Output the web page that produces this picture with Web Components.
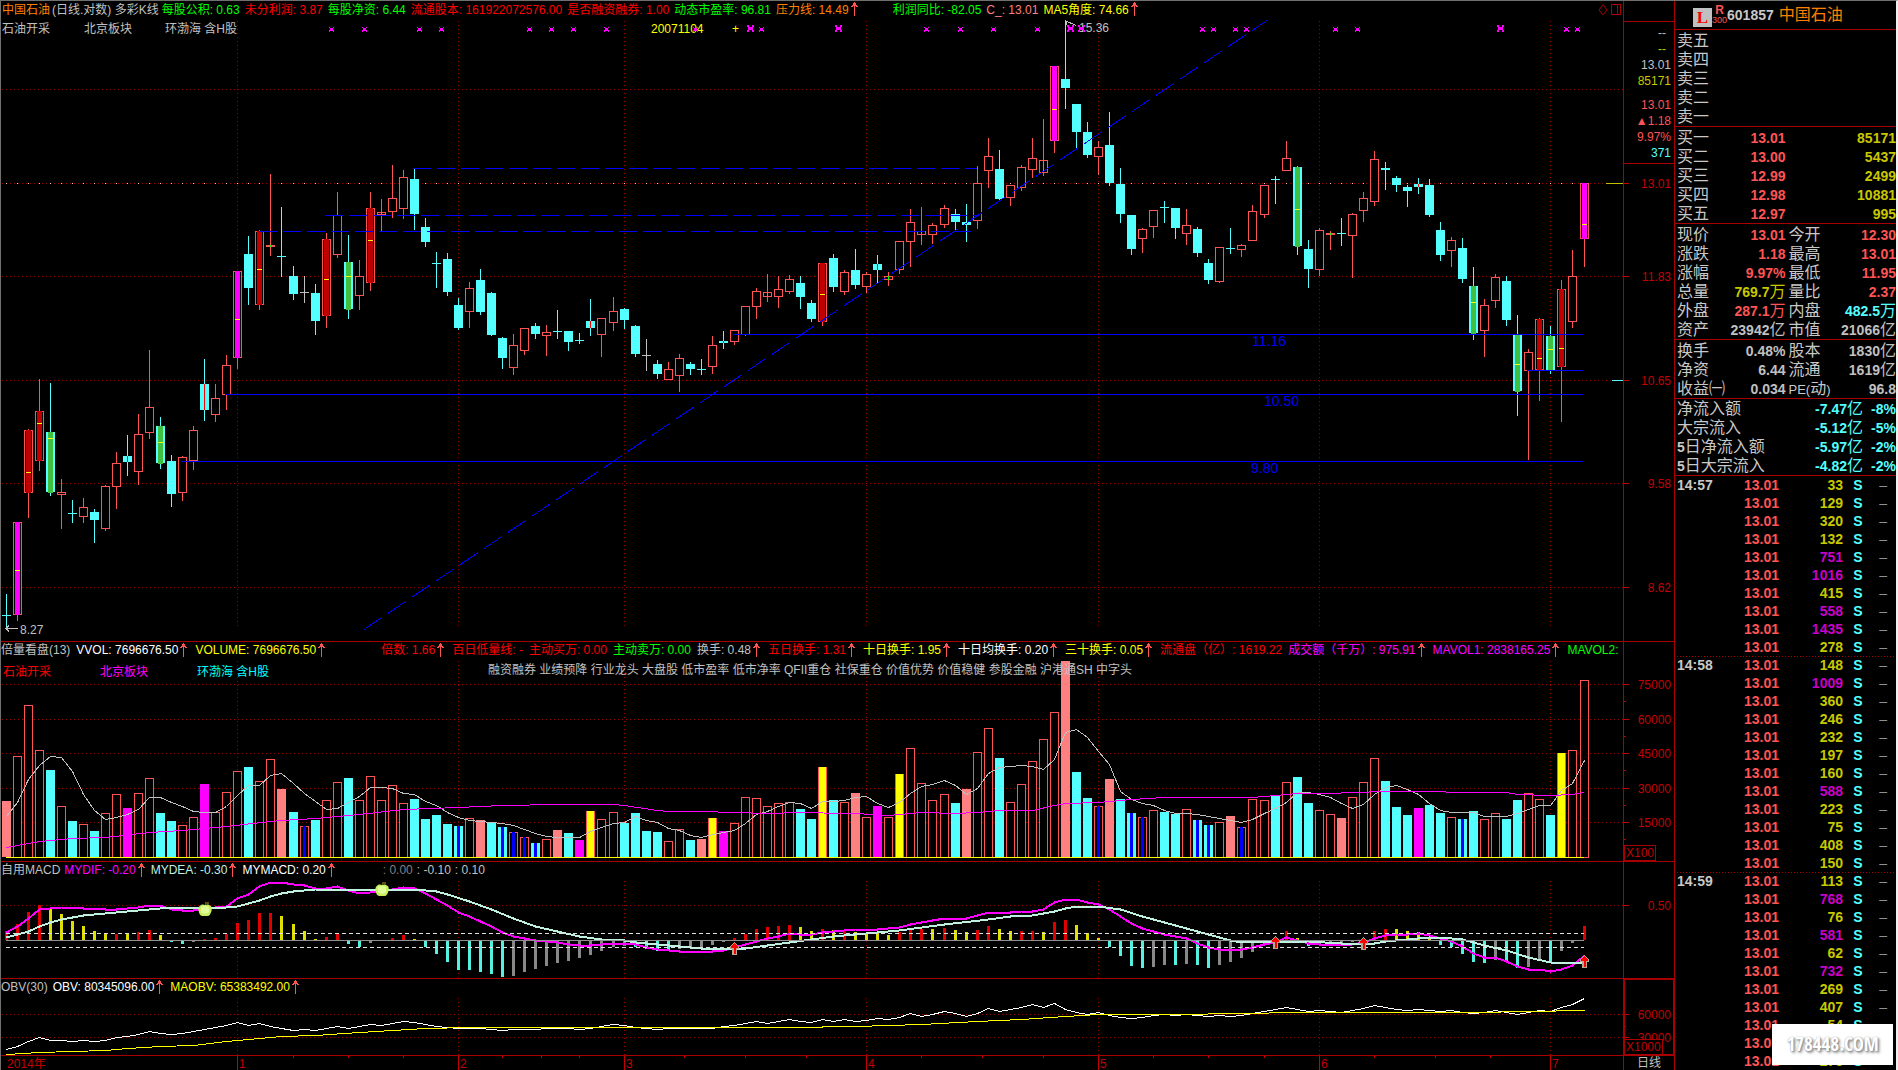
<!DOCTYPE html>
<html lang="zh-CN">
<head>
<meta charset="utf-8">
<title>中国石油 601857</title>
<style>
  html, body {
    margin: 0;
    height: 100%;
    background: #000;
    overflow: hidden;
  }
  body {
    font: 12px/17px "Liberation Sans", "Noto Sans CJK SC", sans-serif;
    color: #c0c0c0;
    --line: #a80000;
    --grid: #980000;
    --scale: #c40000;
    --up: #ff5454;
    --down: #54ffff;
    --gold: #c8c800;
    --mute: #c8c8c8;
  }
  .price indicator-bar { line-height: 19px; padding-left: 1px; }
  .volume indicator-bar { --gap: 6px; }
  .macd indicator-bar { --gap: 4px; }
</style>
</head>
<body>
<stock-terminal>
  <chart-panel class="price">
    <indicator-bar slot="header">
      <indicator-value color="#ff8000">中国石油</indicator-value>
      <indicator-value tight>(日线.对数) 多彩K线</indicator-value>
      <indicator-value color="#00ff00">每股公积: 0.63</indicator-value>
      <indicator-value color="#ff0000">未分利润: 3.87</indicator-value>
      <indicator-value color="#00ff00">每股净资: 6.44</indicator-value>
      <indicator-value color="#ff0000">流通股本: 161922072576.00</indicator-value>
      <indicator-value color="#ff0000">是否融资融券: 1.00</indicator-value>
      <indicator-value color="#00ff00">动态市盈率: 96.81</indicator-value>
      <indicator-value color="#ff8000" up>压力线: 14.49</indicator-value>
      <indicator-value color="#00ff00" lead="narrow">利润同比: -82.05</indicator-value>
      <indicator-value color="#ff8080">C_: 13.01</indicator-value>
      <indicator-value color="#ffff00" up>MA5角度: 74.66</indicator-value>
      <window-tools slot="tools"></window-tools>
    </indicator-bar>
    <price-plot slot="plot"></price-plot>
    <sector-tags slot="tags" class="plain">
      <span>石油开采</span><span>北京板块</span><span>环渤海 含H股</span>
    </sector-tags>
    <value-axis slot="axis" origin="1" labels="183:13.01 276:11.83 380:10.65 483:9.58 587:8.62">
      <level-box></level-box>
    </value-axis>
  </chart-panel>

  <chart-panel class="volume">
    <indicator-bar slot="header">
      <indicator-value>倍量看盘(13)</indicator-value>
      <indicator-value color="#ffffff" up>VVOL: 7696676.50</indicator-value>
      <indicator-value color="#ffff00" up>VOLUME: 7696676.50</indicator-value>
      <indicator-value color="#ff0000" lead="wide" up>倍数: 1.66</indicator-value>
      <indicator-value color="#ff0000">百日低量线: -</indicator-value>
      <indicator-value color="#ff0000">主动买万: 0.00</indicator-value>
      <indicator-value color="#00ff00">主动卖万: 0.00</indicator-value>
      <indicator-value up>换手: 0.48</indicator-value>
      <indicator-value color="#ff0000" up>五日换手: 1.31</indicator-value>
      <indicator-value color="#ffff00" up>十日换手: 1.95</indicator-value>
      <indicator-value color="#ffffff" up>十日均换手: 0.20</indicator-value>
      <indicator-value color="#ffff00" up>三十换手: 0.05</indicator-value>
      <indicator-value color="#ff0000">流通盘（亿）: 1619.22</indicator-value>
      <indicator-value color="#ff00ff" up>成交额（千万）: 975.91</indicator-value>
      <indicator-value color="#ff00ff" up>MAVOL1: 2838165.25</indicator-value>
      <indicator-value color="#00ff00">MAVOL2:</indicator-value>
    </indicator-bar>
    <volume-plot slot="plot"></volume-plot>
    <sector-tags slot="tags" class="vivid">
      <span style="color:#f00">石油开采</span><span style="color:#f0f">北京板块</span><span style="color:#0ff">环渤海 含H股</span>
      <p>融资融券 业绩预降 行业龙头 大盘股 低市盈率 低市净率 QFII重仓 社保重仓 价值优势 价值稳健 参股金融 沪港通SH 中字头</p>
    </sector-tags>
    <value-axis slot="axis" origin="642" minor="17" unit="X100" labels="684:75000 719:60000 753:45000 788:30000 822:15000"></value-axis>
  </chart-panel>

  <chart-panel class="macd">
    <indicator-bar slot="header">
      <indicator-value>自用MACD</indicator-value>
      <indicator-value color="#ff00ff" up>MYDIF: -0.20</indicator-value>
      <indicator-value color="#c0f0e0" up>MYDEA: -0.30</indicator-value>
      <indicator-value color="#ffffff" up>MYMACD: 0.20</indicator-value>
      <indicator-value color="#808080" lead="medium">: 0.00</indicator-value>
      <indicator-value>: -0.10</indicator-value>
      <indicator-value>: 0.10</indicator-value>
    </indicator-bar>
    <macd-plot slot="plot"></macd-plot>
    <value-axis slot="axis" origin="862" labels="905:0.50"></value-axis>
  </chart-panel>

  <chart-panel class="obv">
    <indicator-bar slot="header">
      <indicator-value>OBV(30)</indicator-value>
      <indicator-value color="#ffffff" up>OBV: 80345096.00</indicator-value>
      <indicator-value color="#ffff00" up>MAOBV: 65383492.00</indicator-value>
    </indicator-bar>
    <obv-plot slot="plot"></obv-plot>
    <value-axis slot="axis" origin="979" minor="12" unit="X1000" active labels="1014:60000 1037:30000"></value-axis>
  </chart-panel>

  <time-axis></time-axis>

  <stock-title slot="side" code="601857">中国石油</stock-title>
  <order-book slot="side"></order-book>
  <quote-grid slot="side"></quote-grid>
  <money-flow slot="side"></money-flow>
  <tick-list slot="side"></tick-list>
  <site-mark slot="mark">178448.COM</site-mark>
</stock-terminal>

<script>
const BARS = 144;
const MONTHS = [[21, '1'], [41, '2'], [56, '3'], [78, '4'], [99, '5'], [119, '6'], [140, '7']];

// kind, high, body top, body bottom, low, [half-way mark]
// r hollow, c solid, m/d/g striped, x doji, k grey doji, q solid with red core, v hollow with green core
const CANDLES = `
x 594 615 616 629|m 522 522 615 621 570|d 429 430 493 518 472|d 379 411 461 471 423|g 383 432 492 496 438|r 479 492 495 529
x 500 513 514 523|r 498 507 517 523|c 509 512 520 543|r 485 486 529 531|r 452 463 487 509|q 435 456 462 476
r 414 434 472 485|r 350 407 433 439|g 417 426 463 469 442|c 455 461 494 507|r 456 457 493 501|r 426 430 461 470
q 359 384 410 421|r 384 398 415 422|r 355 365 395 410|m 271 271 358 369 319|c 236 254 288 305|d 230 231 305 310 269
v 174 245 247 256|x 207 256 257 277|c 266 276 294 300|k 276 292 293 303|c 284 293 321 335|d 233 239 316 328 279
r 192 215 255 258|g 235 262 309 319 276|r 260 276 296 310|d 192 208 283 291 240|v 199 212 215 231|r 165 198 212 218
r 170 177 209 219|c 168 179 214 230|c 218 227 242 247|x 252 263 264 288|c 253 259 292 296|c 298 305 328 330
r 282 288 312 328|c 269 280 312 315|c 292 293 335 336|c 337 338 358 369|r 334 345 368 375|r 328 328 351 355
c 323 326 334 339|r 325 332 336 356|x 310 331 332 339|c 331 331 342 351|x 333 340 341 344|q 299 321 328 336
r 318 318 335 357|r 297 311 323 331|c 308 309 320 329|c 325 326 354 357|k 339 355 356 371|c 360 364 374 379
r 362 369 380 380|r 354 358 376 392|c 362 364 369 375|x 359 369 370 375|r 336 345 367 374|q 331 341 343 349
r 330 330 342 345|r 306 306 335 336|r 288 291 307 319|v 274 292 297 302|r 276 289 297 308|r 275 279 292 294
c 276 283 297 309|c 300 303 319 322|d 263 263 322 326 294|c 254 258 287 292|r 270 272 292 295|c 249 270 285 289
r 272 274 287 293|q 255 264 270 283|v 272 276 280 286|r 241 241 270 274|r 209 222 242 267|v 207 231 235 245
r 223 225 235 244|r 205 208 225 228|c 209 214 222 230|c 204 222 225 242|r 166 183 221 229|r 138 156 171 188
c 150 169 199 201|r 185 185 198 206|r 165 167 188 191|r 138 158 170 178|v 119 160 173 176|m 66 66 141 153 109
c 20 79 88 109|c 104 104 132 148|c 122 132 155 158|r 141 147 157 175|c 112 145 183 186|c 168 184 214 223
c 215 215 249 255|r 228 229 239 253|r 210 210 227 238|x 201 207 208 223|c 208 208 228 239|r 209 225 234 245
c 227 229 253 257|c 259 263 280 284|r 247 247 282 283|x 228 248 249 254|r 244 245 250 257|r 205 211 241 241
r 185 185 215 218|x 176 179 180 204|r 141 158 171 171|g 166 167 246 255 209|c 240 249 269 288|r 228 230 270 276
v 231 233 235 250|x 218 233 234 246|r 213 214 236 278|r 192 198 211 222|r 151 159 202 206|c 162 168 170 190
c 176 178 185 192|c 185 187 191 207|q 178 184 187 194|c 179 185 215 217|c 222 230 255 261|r 237 240 251 267
c 238 248 279 283|g 267 286 333 340 302|r 299 305 331 357|r 274 277 301 308|c 276 281 320 326|g 315 335 391 416 364
r 349 352 371 460|d 318 319 370 401 358|g 326 336 370 374 349|d 280 289 367 422 348|r 250 276 322 328|m 183 183 239 267 224`
  .trim().split(/[|\n]/).map(s => s.split(' ').map((v, i) => i ? +v : v));

// p pink, r hollow, c cyan, m magenta, y yellow, s hollow with blue core, b cyan with blue core
const VOLUMES = `p801 r756 r705 r750 c770 r806 c821 r824 c831 r813 r794 m808 r793 r778 c813 c821 r825 r817 m784 r812
r792 r771 c767 r781 r759 p789 c812 s826 c820 r800 r782 c778 r800 r776 r800 r785 r803 c799 c819 c815
c824 b826 r818 p820 c822 b827 s832 s837 b843 r839 p830 c833 m840 y811 r819 r812 c823 c813 c831 c832
r841 r829 c840 p839 y818 m831 r823 r797 r798 r806 r803 r802 c809 c819 y767 c800 r802 p793 r817 m806
r817 y774 r748 r783 r800 r794 c803 p789 r752 r728 c758 r802 r784 r761 r739 r712 p661 c772 c798 s806
p779 c799 b813 s817 r810 c812 c814 r809 b820 b825 r822 p816 s827 r799 r800 c795 r782 c777 c803 r810
r814 p818 r797 r782 r758 c781 c807 c815 m808 c805 c813 r817 b819 c811 r819 r813 c819 c800 r793 r799
c815 y753 r750 r680`.split(/\s+/);

const VOL_MA = `816 802 779 765 756 757 771 794 810 819 817 814 809 797 797 802 806 811 812 812 806 795 785 785 775 773 783 793
801 809 808 802 796 787 787 788 793 794 801 805 812 817 820 821 822 823 825 829 833 836 837 837 837 831 827 823 822 816 820 822
828 830 835 837 834 832 830 823 814 811 806 802 803 808 801 801 800 797 796 803 807 802 793 786 784 780 785 794 788 773 767 766
765 766 769 759 732 729 737 751 764 791 799 803 805 810 813 813 814 816 818 820 822 819 813 808 802 792 792 794 797 803 808 804
794 787 785 789 794 803 810 812 812 812 816 816 816 813 809 805 805 790 783 760`;

const VOL_MA_LONG = `0,847 3,841 6,838 9,837 13,832 16,830 20,826 24,821 25,820 28,818 32,814 36,809 41,807 45,805 50,804 55,804
56,805 59,810 60,811 64,811 65,812 70,813 71,812 77,813 80,815 83,812 86,813 88,812 90,810 93,810 95,805 96,803 99,802 102,799
105,797 113,797 115,795 117,793 119,793 123,792 124,791 130,791 131,792 136,792 137,794 140,795 142,794 143,792`;

// R red, Y yellow, C cyan, G grey
const MACD_BARS = `R931 R924 R912 R905 Y909 Y914 Y921 Y926 Y931 Y934 R934 Y933 R932 R930 Y935 C942 C944 G942 R939 R938 R934 R923
R920 R913 R913 Y916 Y924 Y931 Y939 R937 R934 C944 C947 G943 G941 R938 R935 Y939 C947 C954 C962 C970 C970 C972 C974 C977 G976 G972
G969 G966 G963 G961 G958 G955 G951 G947 G946 C947 C949 C951 C951 G949 G948 G947 G945 G942 R938 R934 R929 R927 R926 R925 Y927 Y931
R929 Y930 R930 Y932 Y933 Y933 Y935 R932 R929 R929 Y929 R928 Y930 Y932 R930 R926 Y929 Y931 R931 R931 Y932 R922 R920 Y925 Y933 Y938
C947 C956 C966 C968 G967 G965 C965 G964 C965 C968 G965 G962 G958 G952 G945 G941 R931 Y938 C946 G945 G946 G945 G942 R938 R931 R929
Y929 Y931 Y932 Y937 C945 C947 C954 C962 C963 G960 C962 C968 G967 G961 C962 G951 G943 R926`.split(/\s+/);

const DIF = `932 926 918 909 908 907 907 908 908 909 909 908 907 905 905 909 910 910 909 907 906 898 894 886 882 882 884 885 888
888 886 890 893 892 891 889 887 888 893 899 905 912 916 921 926 932 936 938 940 941 942 944 945 945 944 943 943 944 947 949 950
951 951 951 951 950 947 944 941 938 936 933 934 934 932 931 930 929 929 929 928 927 924 922 920 918 918 918 915 912 912 912 911
911 909 902 899 899 902 904 909 916 923 928 931 934 936 938 943 947 949 949 949 947 944 942 937 940 943 944 944 945 944 942 938
935 934 934 933 935 938 941 946 953 957 957 961 966 969 969 971 969 965 955`;

const DEA = `0,937 1,934 2,931 3,926 4,922 5,919 6,917 7,915 8,914 10,912 12,910 14,908 20,907 21,906 22,903 23,900 24,896
25,893 26,891 28,889 37,889 39,891 40,894 42,901 44,909 46,918 48,926 50,931 52,936 54,939 56,940 57,942 60,945 63,948 67,948
69,945 71,942 73,939 75,936 78,933 81,930 85,924 89,919 91,916 93,915 95,911 96,908 97,906 99,906 101,909 103,916 106,925
109,934 111,940 112,942 118,941 121,943 124,943 125,941 127,939 129,937 131,938 132,939 134,945 136,950 138,957 140,962
142,963 143,962`;

const OBV = `1049 1046 1041 1037 1040 1040 1041 1040 1041 1040 1037 1036 1034 1031 1033 1034 1033 1031 1029 1027 1025 1022 1025
1023 1026 1028 1030 1029 1030 1028 1026 1028 1026 1024 1025 1023 1021 1022 1024 1026 1027 1028 1028 1028 1029 1030 1029 1029
1029 1028 1028 1028 1029 1028 1026 1024 1025 1027 1028 1029 1028 1028 1028 1028 1028 1026 1025 1023 1021 1023 1021 1019 1021
1022 1019 1021 1019 1021 1020 1018 1019 1017 1013 1016 1014 1011 1013 1016 1013 1008 1011 1009 1007 1004 1007 1003 1009 1012
1014 1012 1015 1017 1018 1017 1015 1014 1015 1014 1015 1016 1015 1016 1015 1013 1011 1009 1007 1009 1011 1010 1011 1012 1010
1008 1005 1007 1009 1010 1009 1010 1011 1010 1012 1013 1012 1010 1012 1014 1012 1010 1011 1007 1004 998`;

const OBV_MA = `0,1054 3,1052 6,1051 9,1050 11,1048 14,1046 17,1045 20,1041 22,1039 25,1036 28,1035 32,1032 35,1030 38,1028
42,1027 71,1027 77,1026 83,1024 88,1021 92,1019 96,1016 99,1014 105,1014 113,1013 116,1012 133,1012 138,1011 140,1011 141,1010 143,1010`;

const TICKS = [
  ['14:57', '33 129 320 132 751 1016 415 558 1435 278'],
  ['14:58', '148 1009 360 246 232 197 160 588 223 75 408 150'],
  ['14:59', '113 768 76 581 62 732 269 407 54 115 276']
];

function define(tag, css, html, extra) {
  customElements.define(tag, class extends HTMLElement {
    constructor() {
      super();
      this.attachShadow({ mode: 'open' });
    }
    connectedCallback() {
      this.shadowRoot.innerHTML = `<style>${css}</style>${typeof html === 'function' ? html(this) : html}`;
      if (extra) extra(this);
    }
  });
}

/* ---------- layout ---------- */

define('stock-terminal', `
  :host {
    display: grid;
    grid-template-columns: minmax(0, 1fr) 222px;
    grid-template-rows: minmax(0, 1fr);
    box-sizing: border-box;
    height: 100vh;
    border-top: 1px solid #707070;
    border-left: 1px solid #707070;
    border-right: 2px solid #f0f0f0;
    position: relative;
  }
  main { display: flex; flex-direction: column; min-width: 0; min-height: 0; }
  aside { border-left: 1px solid var(--line); overflow: hidden; min-height: 0; }
`, `<main><slot></slot></main><aside><slot name="side"></slot></aside><slot name="mark"></slot>`);

define('chart-panel', `
  :host {
    display: grid;
    grid-template-columns: minmax(0, 1fr) 51px;
    grid-template-rows: minmax(0, 1fr);
    box-sizing: border-box;
    border-top: 1px solid var(--line);
    min-height: 0;
    flex: none;
  }
  :host(.price) { flex: 1; border-top: 0; }
  :host(.volume) { height: 220px; }
  :host(.macd) { height: 117px; }
  :host(.obv) { height: 77px; }
  .chart { display: flex; flex-direction: column; min-width: 0; min-height: 0; }
  .stage { flex: 1; display: grid; grid-template: minmax(0, 1fr) / minmax(0, 1fr); min-height: 0; }
  ::slotted([slot=plot]), ::slotted([slot=tags]) { grid-area: 1 / 1; min-width: 0; min-height: 0; }
`, `<div class="chart"><slot name="header"></slot><div class="stage"><slot name="plot"></slot><slot name="tags"></slot></div></div><slot name="axis"></slot>`);

define('indicator-bar', `
  :host { display: flex; flex: none; justify-content: space-between; height: 19px; white-space: nowrap; overflow: hidden; }
  .values { display: flex; gap: var(--gap, 5px); min-width: 0; overflow: hidden; }
`, `<div class="values"><slot></slot></div><slot name="tools"></slot>`);

define('indicator-value', `
  :host { display: inline-flex; flex: none; }
  :host([tight]) { margin: 0 -2px 0 -3px; }
  :host([lead=narrow]) { margin-left: 28px; }
  :host([lead=medium]) { margin-left: 42px; }
  :host([lead=wide]) { margin-left: 48px; }
  svg { width: 11px; height: 17px; fill: var(--up); shape-rendering: crispEdges; }
`, el => `<slot></slot>${el.hasAttribute('up') ? `
  <svg viewBox="0 0 11 17" aria-hidden="true"><path d="M5 1h1v14h-1zM4 2h3v2h-3zM3 4h5v1h-5zM2 5h2v1h-2zM7 5h2v1h-2z"/></svg>` : ''}`,
  el => { el.style.color = el.getAttribute('color') || ''; });

define('window-tools', `
  :host { display: flex; gap: 3px; padding-right: 2px; }
  button { all: unset; width: 10px; height: 17px; }
  svg { display: block; width: 10px; height: 17px; fill: none; stroke: var(--line); }
`, `<button aria-label="菱形"><svg viewBox="0 0 10 17"><path d="M5 3.5 9 9 5 14 1 9z"/></svg></button>
    <button aria-label="分栏"><svg viewBox="0 0 10 17" shape-rendering="crispEdges"><path d="M.5 3.5h9v10h-9zM6.5 3.5v10"/></svg></button>`);

define('sector-tags', `
  :host { display: grid; grid-template-columns: 82px 81px 1fr; align-content: start; padding-left: 1px; padding-top: 1px; position: relative; }
  :host(.vivid) { grid-template-columns: 97px 97px 291px 1fr; padding-left: 2px; line-height: 20px; }
  ::slotted(p) { margin: 0; line-height: 16px; white-space: nowrap; }
`, `<slot></slot>`);

/* ---------- plots ---------- */

const rect = (x, y, w, h, fill) => `<rect x="${x}" y="${y}" width="${w}" height="${h}" fill="${fill}"/>`;
const hline = (x, y, w, color) => rect(x, y, w, 1, color);

class BasePlot extends HTMLElement {
  constructor() {
    super();
    this.attachShadow({ mode: 'open' });
    this.shadowRoot.innerHTML = `
      <style>
        :host { display: block; overflow: hidden; }
        svg { display: block; width: 100%; height: 100%; shape-rendering: crispEdges; }
        .grid { stroke: var(--grid); stroke-dasharray: 1 3; fill: none; }
        text { font-size: 12px; }
        .level { font-size: 14px; fill: #0000f0; }
      </style>
      <svg preserveAspectRatio="xMinYMin"></svg>`;
  }

  connectedCallback() {
    this.render();
    new ResizeObserver(() => this.render()).observe(this);
  }

  // left pixel of the wick of bar i
  x(i) {
    return Math.floor(5.12 + i * (this.width - 44.1) / 143);
  }

  line(data, color, width = 1) {
    const list = data.trim().split(/\s+/).map((p, i) => {
      const [a, b] = p.includes(',') ? p.split(',') : [i, p];
      return `${this.x(+a) + 0.5},${+b + 0.5}`;
    });
    return `<polyline points="${list.join(' ')}" fill="none" stroke="${color}" stroke-width="${width}"/>`;
  }

  grid(rows, top, bottom) {
    const h = rows.map(y => `M1 ${y}.5H${this.width}`).join('');
    const v = MONTHS.map(([i]) => `M${this.x(i)}.5 ${top}V${bottom}`).join('');
    return `<path class="grid" d="${h}${v}"/>`;
  }

  render() {
    const box = this.getBoundingClientRect();
    this.width = Math.round(box.width);
    const svg = this.shadowRoot.querySelector('svg');
    svg.setAttribute('viewBox', `0 ${this.origin} ${this.width} ${Math.round(box.height)}`);
    svg.innerHTML = this.draw();
  }
}

const UP = '#ff5454', DOWN = '#54ffff';

customElements.define('price-plot', class extends BasePlot {
  origin = 20;

  candle([kind, high, top, bottom, low, mark], i) {
    const x = this.x(i);
    const falling = 'cgxq'.includes(kind);
    const color = kind === 'k' ? '#c0c0c0' : falling ? DOWN : UP;
    let out = rect(x, high, 1, low - high, color);
    if (kind === 'x' || kind === 'k') return out + hline(x - 4, top, 9, color);
    out += rect(x - 4, top, 9, bottom - top, color);
    if (!falling && bottom - top > 2) out += rect(x - 3, top + 1, 7, bottom - top - 2, '#000');
    const core = { m: '#ff00ff', d: '#c00000', g: '#40c040' }[kind];
    if (core) out += rect(x - 2, top, 5, bottom - top + (kind === 'g' ? 1 : 0), core) + hline(x - 2, mark, 5, '#ffff00');
    if (kind === 'q') out += rect(x, top, 1, bottom - top, '#ff0000');
    if (kind === 'v') out += rect(x, top, 1, bottom - top, '#00ff00');
    return out;
  }

  flag(i, big) {
    const x = this.x(i) + 5;
    return big
      ? `<path d="M${x - 3} 25h2v2h3v-2h2v2h-1v3h1v2h-2v-2h-3v2h-2v-2h1v-3h-1z" fill="#ff00ff"/>`
      : `<path d="M${x - 2} 27h1v1h3v-1h1v1h-1v2h1v2h-1v-1h-3v1h-1v-2h1v-2h-1z" fill="#ff00ff"/>`;
  }

  draw() {
    const w = this.width, X = i => this.x(i), end = X(143);
    let out = this.grid([89, 183, 276, 380, 483, 587], 21, 627);
    for (let i = 0; i < BARS; i++) out += rect(X(i), 183, 1, 1, '#ffc0c0');
    out += CANDLES.map((c, i) => this.candle(c, i)).join('');
    out += [[20, 394], [16, 461], [66, 334], [138, 370]]
      .map(([i, y]) => hline(X(i) - 1, y, end - X(i), '#0000ff')).join('');
    out += `<g stroke="#0000ff" fill="none" stroke-dasharray="18 6">
      <path d="M${X(37) - 1} 168.5H${X(88)}"/><path d="M${X(29) - 1} 215.5H${X(88)}"/><path d="M${X(23)} 231.5H${X(88) - 6}"/>
      <path stroke-dasharray="21.7 7.25" d="M${X(32.5)} 629.5L${X(114.3)} 20.5"/></g>`;
    out += hline(w - 17, 183, 17, '#c0c000') + hline(w - 11, 380, 11, DOWN);
    out += `<text x="${X(58) + 5}" y="33" fill="#ffff00">20071104</text><text x="${X(66) - 2}" y="33" fill="#ffff00">+</text>`;
    out += `<g fill="#c0c0c0"><text x="${X(0) + 14}" y="634">8.27</text><text x="${X(97) + 3}" y="32">15.36</text></g>
      <path d="M${X(0)} 628.5h12M${X(0) + 3} 625.5l-3 3 3 3M${X(96)} 20.5l11 5M${X(96) + 4} 19.5h-4l2 5" fill="none" stroke="#c0c0c0"/>`;
    out += `<text class="level" x="${X(113)}" y="346">11.16</text>
      <text class="level" x="${X(114)}" y="406">10.50</text>
      <text class="level" x="${X(113) - 1}" y="473">9.80</text>`;
    out += [29, 32, 37, 39, 47, 49, 51, 54, 62, 68, 83, 86, 89, 93, 108, 109, 111, 112, 120, 122, 141, 142].map(i => this.flag(i)).join('');
    out += [67, 75, 96, 97, 135].map(i => this.flag(i, true)).join('');
    return out;
  }
});

customElements.define('volume-plot', class extends BasePlot {
  origin = 661;

  bar(code, i) {
    const kind = code[0], top = +code.slice(1), h = 857 - top, x = this.x(i) - 4;
    if (kind === 'c') return rect(x, top, 9, h, DOWN);
    if (kind === 'p') return rect(x, top, 9, h, '#ff8080');
    if (kind === 'm') return rect(x, top, 9, h, '#ff00ff');
    if (kind === 'b') return rect(x, top, 9, h, DOWN) + rect(x + 3, top, 3, h, '#0000ff');
    const hollow = rect(x, top, 9, h + 1, UP) + rect(x + 1, top + 1, 7, h - 1, '#000');
    if (kind === 'y') return rect(x, top, 9, h, UP) + rect(x + 1, top, 7, h, '#ffff00');
    return kind === 's' ? hollow + rect(x + 3, top, 3, h, '#0000ff') : hollow;
  }

  draw() {
    return this.grid([684, 719, 753, 788, 822], 661, 858)
      + VOLUMES.map((v, i) => this.bar(v, i)).join('')
      + this.line(VOL_MA, '#c0c0c0') + this.line(VOL_MA_LONG, '#ff00ff')
      + hline(this.x(0), 857, this.x(143) - this.x(0), '#ffff00');
  }
});

customElements.define('macd-plot', class extends BasePlot {
  origin = 881;

  apple(i, y) {
    const x = this.x(i) - 6;
    return `<g transform="translate(${x} ${y})" shape-rendering="auto">
      <path d="M7 5V1h4v2H8v2z" fill="#605010"/>
      <path d="M3 4c2-1 3 0 4 0s3-1 4 0c3 1 3 3 2.500 6-1 3-2 5-4 5H4.500C2 15 1 12 .5 9 0 7 1 5 3 4z" fill="#c8f060"/>
      <path d="M3 6c2-1 6-1 8 0v5c-2 2-6 2-8 0z" fill="#e0ff98"/></g>`;
  }

  arrow(i, y) {
    const x = this.x(i);
    return `<path d="M${x - 2} ${y + 12}V${y + 6}h-2v-2l4-5h1l4 5v2h-2v6z" fill="#b8a890"/>
      <path d="M${x} ${y + 11}V${y + 5}h-3v-1l3-4h1l3 4v1h-2v6z" fill="#ff0000"/>`;
  }

  draw() {
    const colors = { R: '#e00000', Y: '#e0e000', C: '#54f0e0', G: '#888888' };
    const x0 = this.x(0), w = this.x(143) - x0;
    return this.grid([905], 881, 978)
      + MACD_BARS.map((code, i) => {
          const y = +code.slice(1), x = this.x(i) - 1;
          return y < 940 ? rect(x, y, 3, 940 - y, colors[code[0]]) : rect(x, 941, 3, y - 941, colors[code[0]]);
        }).join('')
      + this.line(DIF, '#ff00ff', 2) + this.line(DEA, '#c0f0e0', 2)
      + hline(x0, 940, w, '#909090')
      + `<path d="M${x0} 933.5h${w}M${x0} 947.5h${w}" stroke="#e0e0e0" stroke-dasharray="4 3"/>`
      + this.apple(18, 901) + this.apple(34, 881)
      + this.arrow(66, 943) + this.arrow(115, 937) + this.arrow(123, 938) + this.arrow(143, 956);
  }
});

customElements.define('obv-plot', class extends BasePlot {
  origin = 998;

  draw() {
    return this.grid([1014, 1037], 998, 1055) + this.line(OBV, '#ffffff') + this.line(OBV_MA, '#ffff00');
  }
});

/* ---------- axes ---------- */

define('value-axis', `
  :host { display: grid; grid-template: minmax(0, 1fr) / minmax(0, 1fr); border-left: 1px solid var(--line); min-height: 0; }
  svg, slot, .unit { grid-area: 1 / 1; }
  svg { width: 100%; height: 100%; min-height: 0; shape-rendering: crispEdges; overflow: hidden; }
  :host([active]) svg { outline: 1px solid var(--line); outline-offset: -1px; }
  text { font-size: 12px; fill: var(--scale); text-anchor: end; }
  path { stroke: var(--scale); }
  slot { display: block; }
  .unit { place-self: end start; border: 1px solid var(--line); background: #000; color: var(--scale); line-height: 14px; padding: 0 1px; position: relative; }
`, el => {
  const minor = +el.getAttribute('minor');
  const rows = el.getAttribute('labels').split(' ').map(s => s.split(':'));
  const unit = el.getAttribute('unit');
  return `<svg preserveAspectRatio="xMinYMin">
    ${rows.map(([y, t]) => `<path d="M0 ${y}.5h5${minor ? `M0 ${+y + minor}.5h2` : ''}"/><text x="47" y="${+y + 5}">${t}</text>`).join('')}
  </svg><slot></slot>${unit ? `<span class="unit">${unit}</span>` : ''}`;
}, el => {
  const svg = el.shadowRoot.querySelector('svg');
  new ResizeObserver(() => {
    svg.setAttribute('viewBox', `0 ${el.getAttribute('origin')} 50 ${Math.round(el.getBoundingClientRect().height)}`);
  }).observe(el);
});

define('level-box', `
  :host {
    display: block;
    margin-top: 20px;
    border: 1px solid var(--line);
    border-width: 1px 0;
    padding: 3px 3px 2px 0;
    text-align: right;
    line-height: 16px;
  }
  div + div { margin-top: 8px; }
  p { margin: 0; }
  .dash { padding-right: 5px; }
  .gold { color: var(--gold); }
  .up { color: var(--up); }
  .down { color: var(--down); }
`, `<div><p class="dash">--</p><p class="dash gold">--</p><p>13.01</p><p class="gold">85171</p></div>
    <div><p class="up">13.01</p><p class="up">▲1.18</p><p class="up">9.97%</p><p class="down">371</p></div>`);

customElements.define('time-axis', class extends BasePlot {
  connectedCallback() {
    this.shadowRoot.querySelector('style').textContent += `
      :host { display: grid; grid-template-columns: minmax(0, 1fr) 51px; height: 15px; border-top: 1px solid var(--line); box-sizing: border-box; flex: none; }
      text { fill: var(--scale); }
      path { stroke: var(--scale); }
      button { all: unset; border-left: 1px solid var(--line); text-align: center; line-height: 14px; }`;
    this.shadowRoot.innerHTML += '<button>日线</button>';
    super.connectedCallback();
  }

  render() {
    const svg = this.shadowRoot.querySelector('svg');
    this.width = Math.round(this.getBoundingClientRect().width) - 51;
    svg.setAttribute('viewBox', `0 0 ${this.width} 14`);
    const minor = [26, 31, 36, 45, 48.5, 52, 61.5, 67, 72.5, 83, 88.5, 94, 104, 109, 114, 124, 129.5, 134.5];
    svg.innerHTML = `<text x="6" y="12">2014年</text>`
      + MONTHS.map(([i, m]) => `<path d="M${this.x(i)}.5 0v14"/><text x="${this.x(i) + 2}" y="12">${m}</text>`).join('')
      + `<path d="${minor.map(i => `M${this.x(i)}.5 0v2`).join('')}"/>`;
  }
});

/* ---------- quote side bar ---------- */

const TABLE_CSS = `
  :host { display: block; font-size: 16px; }
  .group { padding: 1px 0 0 2px; border-bottom: 1px solid var(--line); }
  table { width: 100%; border-collapse: collapse; table-layout: fixed; }
  th, td { padding: 0; height: 19px; line-height: 18px; white-space: nowrap; }
  th { text-align: left; font-weight: 400; color: var(--mute); }
  td { text-align: right; font-size: 14px; font-weight: 700; }
  td i { font-style: normal; font-weight: 400; font-size: 16px; line-height: 0; }
  .up { color: var(--up); }
  .down { color: var(--down); }
  .gold { color: var(--gold); }
  .l1 { width: 48px; }
  .l2 { width: 50px; }
`;
const COLS = '<colgroup><col class="l1"><col><col class="l2"><col></colgroup>';

define('stock-title', `
  :host { display: flex; align-items: center; height: 29px; border-bottom: 1px solid var(--line); padding-left: 18px; box-sizing: border-box; }
  .badge { width: 19px; height: 19px; margin-top: 5px; background: #c0c0c0; color: #f00; font: 700 17px/19px "Liberation Serif", serif; text-align: center; }
  .flags { color: var(--up); display: grid; line-height: 10px; justify-items: center; }
  .flags b { font-size: 12px; }
  .flags span { font-size: 9px; }
  h1 { display: flex; gap: 5px; margin: 0; font-size: 14px; line-height: 28px; color: var(--mute); }
  h1 span { font-size: 16px; font-weight: 400; color: #ff8000; }
`, el => `<div class="badge">L</div><div class="flags"><b>R</b><span>300</span></div><h1>${el.getAttribute('code')}<span><slot></slot></span></h1>`);

define('order-book', TABLE_CSS, () => {
  const sell = ['五', '四', '三', '二', '一'].map(n => `<tr><th scope="row">卖${n}</th><td></td><td colspan="2"></td></tr>`).join('');
  const buy = [['一', '13.01', 85171], ['二', '13.00', 5437], ['三', '12.99', 2499], ['四', '12.98', 10881], ['五', '12.97', 995]]
    .map(([n, p, v]) => `<tr><th scope="row">买${n}</th><td class="up">${p}</td><td class="gold" colspan="2">${v}</td></tr>`).join('');
  return [sell, buy].map(rows => `<div class="group"><table>${COLS}${rows}</table></div>`).join('');
});

define('quote-grid', TABLE_CSS + `
  td + th { padding-left: 3px; }
  small { font-size: 13px; line-height: 0; }
`, () => {
  const row = r => `<tr>${[r.slice(0, 3), r.slice(3)].map(([l, v, c]) => `<th scope="row">${l}</th><td class="${c}">${v.replace(/[万亿]/, '<i>$&</i>')}</td>`).join('')}</tr>`;
  const top = [
    ['现价', '13.01', 'up', '今开', '12.30', 'up'],
    ['涨跌', '1.18', 'up', '最高', '13.01', 'up'],
    ['涨幅', '9.97%', 'up', '最低', '11.95', 'up'],
    ['总量', '769.7万', 'gold', '量比', '2.37', 'up'],
    ['外盘', '287.1万', 'up', '内盘', '482.5万', 'down'],
    ['资产', '23942亿', '', '市值', '21066亿', '']
  ];
  const bottom = [
    ['换手', '0.48%', '', '股本', '1830亿', ''],
    ['净资', '6.44', '', '流通', '1619亿', ''],
    ['收益㈠', '0.034', '', '<small>PE(</small>动<small>)</small>', '96.8', '']
  ];
  return [top, bottom].map(g => `<div class="group"><table>${COLS}${g.map(row).join('')}</table></div>`).join('');
});

define('money-flow', TABLE_CSS + `
  .group { padding-top: 0; }
  .net { width: 94px; }
  .pct { width: 33px; }
  b { font-size: 14px; line-height: 0; }
`, () => `<div class="group"><table><colgroup><col><col class="net"><col class="pct"></colgroup>${[
  ['净流入额', '-7.47', '-8%'],
  ['大宗流入', '-5.12', '-5%'],
  ['<b>5</b>日净流入额', '-5.97', '-2%'],
  ['<b>5</b>日大宗流入', '-4.82', '-2%']
].map(([l, v, p]) => `<tr><th scope="row">${l}</th><td class="down">${v}<i>亿</i></td><td class="down">${p}</td></tr>`).join('')}</table></div>`);

define('tick-list', TABLE_CSS + `
  :host { padding-left: 2px; }
  th, td { height: 18px; line-height: 16px; box-sizing: border-box; }
  th { font-size: 14px; font-weight: 700; }
  td.side { text-align: center; }
  td.none { color: #909090; font-weight: 400; padding-right: 9px; }
  .big { color: #c800c8; }
  tbody + tbody tr:first-child { background: repeating-linear-gradient(90deg, var(--line) 0 1px, transparent 1px 3px) top / 100% 1px no-repeat; }
  .price, .vol { width: 64px; }
  .dir { width: 30px; }
  .cnt { width: 23px; }
`, () => `<table><colgroup><col><col class="price"><col class="vol"><col class="dir"><col class="cnt"></colgroup>${TICKS.map(([time, list]) =>
  `<tbody>${list.split(' ').map((v, i) => `<tr><th scope="row">${i ? '' : time}</th><td class="up">13.01</td><td class="${v >= 500 ? 'big' : 'gold'}">${v}</td><td class="down side">S</td><td class="none">–</td></tr>`).join('')}</tbody>`).join('')}</table>`);

define('site-mark', `
  :host {
    position: absolute;
    right: 3px;
    bottom: 5px;
    width: 121px;
    height: 41px;
    background: #fff;
    color: #fff;
    font: 700 19px/41px "Open Sans Condensed", "Liberation Sans Narrow", "Liberation Sans", sans-serif;
    text-align: center;
    text-shadow: 0 0 1px #999, 1px 1px 2px #888, 2px 2px 3px #aaa;
  }
`, `<slot></slot>`);
</script>
</body>
</html>
